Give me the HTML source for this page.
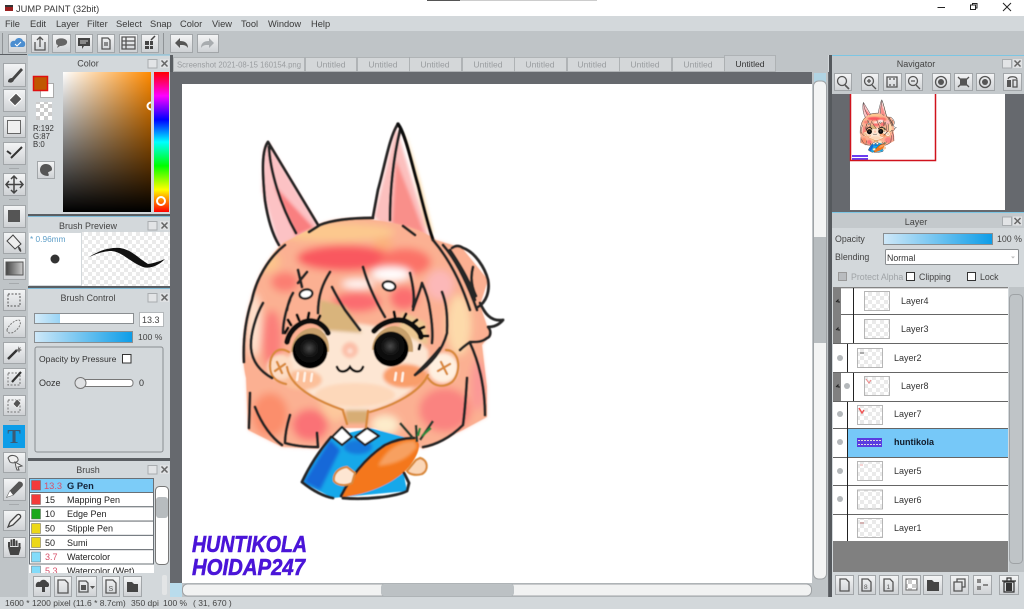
<!DOCTYPE html>
<html><head><meta charset="utf-8"><title>JUMP PAINT</title>
<style>
html,body{margin:0;padding:0;background:#d3d8db;width:1024px;height:609px;overflow:hidden}
svg{display:block;font-family:"Liberation Sans",sans-serif;font-size:9px;fill:#333}
.b{fill:url(#btn);stroke:#a2a6a9;stroke-width:1}
.h{fill:#c5cacd}
.t{text-anchor:middle;fill:#444;font-size:9px}
.m{font-size:9.3px;fill:#3a3a3a}
.ln{fill:none;stroke:#262626;stroke-width:2.9;stroke-linecap:round;stroke-linejoin:round}
.o{fill:none;stroke:#d98a3e;stroke-width:2.4;stroke-linecap:round}
.i{fill:#555}
.s{fill:none;stroke:#555;stroke-width:1.3}
.tab{fill:#d4d7d9;stroke:#a5a9ac;stroke-width:.7}
.tt{font-size:8.6px;fill:#9a9da0;text-anchor:middle}
.row{fill:#fff;stroke:#333;stroke-width:.8}
.lt{font-size:9px;fill:#333}
.br{font-size:9px;fill:#222}
.dot{fill:#b4b8bb}
.th{fill:url(#chk);stroke:#a5a5a5;stroke-width:.8}
</style></head><body>
<svg width="1024" height="609" viewBox="0 0 1024 609" xmlns="http://www.w3.org/2000/svg">
<defs>
<linearGradient id="btn" x1="0" y1="0" x2="0" y2="1"><stop offset="0" stop-color="#f4f5f6"/><stop offset="1" stop-color="#ced1d4"/></linearGradient>
<linearGradient id="bar" x1="0" y1="0" x2="1" y2="0"><stop offset="0" stop-color="#cfe8f8"/><stop offset="1" stop-color="#0d9de8"/></linearGradient>
<linearGradient id="bar2" x1="0" y1="0" x2="1" y2="0"><stop offset="0" stop-color="#d4ebf9"/><stop offset="1" stop-color="#99d4f5"/></linearGradient>
<linearGradient id="cw" x1="0" y1="0" x2="1" y2="0"><stop offset="0" stop-color="#fff"/><stop offset="1" stop-color="#ff8a00"/></linearGradient>
<linearGradient id="cb" x1="0" y1="0" x2="0" y2="1"><stop offset="0" stop-color="#000" stop-opacity="0"/><stop offset="1" stop-color="#000"/></linearGradient>
<linearGradient id="hue" x1="0" y1="0" x2="0" y2="1"><stop offset="0" stop-color="#f00"/><stop offset=".17" stop-color="#f0f"/><stop offset=".34" stop-color="#00f"/><stop offset=".5" stop-color="#0ff"/><stop offset=".67" stop-color="#0f0"/><stop offset=".84" stop-color="#ff0"/><stop offset="1" stop-color="#f00"/></linearGradient>
<linearGradient id="grad" x1="0" y1="0" x2="1" y2="0"><stop offset="0" stop-color="#444"/><stop offset="1" stop-color="#ccc"/></linearGradient>
<pattern id="chk" width="8" height="8" patternUnits="userSpaceOnUse"><rect width="8" height="8" fill="#fff"/><rect width="4" height="4" fill="#eaeaea"/><rect x="4" y="4" width="4" height="4" fill="#eaeaea"/></pattern>
<pattern id="chk2" width="8" height="8" patternUnits="userSpaceOnUse"><rect width="8" height="8" fill="#fff"/><rect width="4" height="4" fill="#ccc"/><rect x="4" y="4" width="4" height="4" fill="#ccc"/></pattern>
<filter id="bl" x="-30%" y="-30%" width="160%" height="160%"><feGaussianBlur stdDeviation="4"/></filter>
<filter id="bl2" x="-30%" y="-30%" width="160%" height="160%"><feGaussianBlur stdDeviation="1.6"/></filter>
<filter id="bl3"><feGaussianBlur stdDeviation=".4"/></filter>
<radialGradient id="eye" cx=".48" cy=".42" r=".5"><stop offset="0" stop-color="#4a4a4a"/><stop offset=".45" stop-color="#141414"/><stop offset="1" stop-color="#000"/></radialGradient>
<clipPath id="navc"><rect x="850" y="94" width="155" height="116"/></clipPath>
<clipPath id="brc"><rect x="29" y="478" width="125" height="95"/></clipPath>
<clipPath id="colc"><rect x="63" y="72" width="88" height="140"/></clipPath>
<clipPath id="hairc"><path d="M283 243C262 262 248 295 244 333C242 350 243 365 246 378L248 430L282 447L318 449L345 428L375 428L423 449L463 430L487 417L487 387L482 345L490 335L480 305L488 280L462 248L436 240C410 220 340 212 318 225Z"/></clipPath>

<g id="chibi">
 <g filter="url(#bl2)">
  <path d="M264 150L268 142L318 225L295 245L278 245L262 190Z" fill="#fcc2c4"/>
  <path d="M274 185L314 228L296 236Z" fill="#f97f80"/>
  <path d="M374 217L396 126L430 240L400 240Z" fill="#fcc0be"/>
  <path d="M396 160L412 200L425 235L392 225Z" fill="#f98f8a"/>
  <path d="M405 130L420 180L434 235L425 225Z" fill="#fde0b4"/>
 </g>
 <path d="M283 243C262 262 248 295 244 333C242 350 243 365 246 378L248 430L282 447L318 449L345 428L375 428L423 449L463 430L487 417L487 387L482 345L490 335L480 305L488 280L462 248L436 240C410 220 340 212 318 225Z" fill="#fbb8a0" opacity=".55" filter="url(#bl2)"/>
 <g clip-path="url(#hairc)">
 <g filter="url(#bl)">
  <rect x="235" y="210" width="260" height="240" fill="#fbb092"/>
  <ellipse cx="335" cy="232" rx="60" ry="9" fill="#fcc98e"/>
  <ellipse cx="345" cy="258" rx="48" ry="13" fill="#f9585e"/>
  <ellipse cx="405" cy="262" rx="26" ry="14" fill="#fb7268"/>
  <ellipse cx="383" cy="244" rx="10" ry="6" fill="#fbb07c"/>
  <ellipse cx="285" cy="282" rx="14" ry="10" fill="#fb7e72"/>
  <ellipse cx="268" cy="262" rx="12" ry="10" fill="#fcc48c"/>
  <ellipse cx="272" cy="340" rx="10" ry="30" fill="#fb7f7a"/>
  <ellipse cx="254" cy="325" rx="7" ry="32" fill="#fee3cf"/>
  <ellipse cx="270" cy="415" rx="18" ry="22" fill="#fb8e6c"/>
  <ellipse cx="310" cy="425" rx="18" ry="16" fill="#fa7276"/>
  <ellipse cx="335" cy="405" rx="14" ry="16" fill="#fdc89c"/>
  <ellipse cx="445" cy="410" rx="26" ry="22" fill="#fa8380"/>
  <ellipse cx="385" cy="425" rx="14" ry="10" fill="#fdeccb"/>
  <ellipse cx="459" cy="325" rx="12" ry="30" fill="#fddaaa"/>
  <ellipse cx="478" cy="385" rx="7" ry="26" fill="#fb9696"/>
  <ellipse cx="357" cy="302" rx="24" ry="10" fill="#fb6c70"/>
  <ellipse cx="404" cy="298" rx="14" ry="12" fill="#fb6e70"/>
  <ellipse cx="391" cy="274" rx="20" ry="7" fill="#fff"/>
  <ellipse cx="358" cy="284" rx="16" ry="4" fill="#fff"/>
  <ellipse cx="440" cy="285" rx="14" ry="15" fill="#fcb8b8"/>
 </g>
 </g>
 <g filter="url(#bl2)">
  <path d="M288 360C295 340 320 330 345 322C375 325 410 330 428 350C432 375 410 400 372 410L345 410C310 398 290 385 288 360Z" fill="#fde6d3"/>
  <path d="M320 300L345 306L362 333L320 330Z" fill="#d9b47c"/>
  <path d="M402 312L425 322L428 345L398 333Z" fill="#ecc892"/>
  <ellipse cx="405" cy="376" rx="22" ry="12" fill="#f99e6a"/>
  <ellipse cx="302" cy="380" rx="20" ry="10" fill="#fcc09a"/>
  <ellipse cx="355" cy="395" rx="40" ry="12" fill="#fdd8ba"/>
  <circle cx="350" cy="350" r="8" fill="#fcbfa8"/>
  <circle cx="350" cy="351" r="2" fill="#fff0e8"/>
  <circle cx="280" cy="367" r="13" fill="#fddcc2"/>
  <circle cx="443" cy="368" r="15" fill="#fff0e0"/>
  <rect x="346" y="410" width="22" height="13" fill="#d7ad74"/>
 </g>
 <path d="M331 437C318 450 310 465 302 482L333 498L343 497L407 491L403 470L415 440L370 428Z" fill="#16a8ea"/>
 <path d="M330 440L304 482L320 490L340 450Z" fill="#1868d8" filter="url(#bl2)"/>
 <ellipse cx="358" cy="447" rx="14" ry="7" fill="#1478dc" filter="url(#bl2)"/>
 <path d="M416 438C400 436 380 445 370 457C358 470 347 482 340 497C360 496 385 488 403 473C412 465 420 452 419 444Z" fill="#f4771c"/>
 <path d="M415 441C400 440 385 450 378 466C395 465 410 458 417 447Z" fill="#f7a060" filter="url(#bl2)"/>
 <path class="ln" d="M331 437C320 450 310 465 302 482C312 490 322 496 333 498M343 498C365 500 395 497 407 491L409 483L404 473"/>
 <path class="ln" d="M341 496C350 478 365 458 385 445C395 440 405 438 414 438" stroke-width="2.3"/>
 <path d="M332 437L342 427L352 437L342 445Z M355 437L367 428L379 436L365 445Z" fill="#fff" stroke="#222" stroke-width="2.4" stroke-linejoin="round"/>
 <path d="M417 442L416 425M420 440L433 421M413 438L400 423" stroke="#2c3c30" stroke-width="2.6" fill="none"/>
 <path d="M422 436L431 428M418 436L420 428" stroke="#2f8a3c" stroke-width="2.4" fill="none"/>
 <path d="M347 467C338 468 333 474 334 481C338 486 346 486 352 483L355 473Z" fill="#fde6d2" stroke="#d98a3e" stroke-width="2.2"/>
 <path d="M420 458C428 460 429 470 422 474C415 476 409 474 407 471L416 460Z" fill="#fbd6b6" stroke="#d98a3e" stroke-width="2.2"/>
 <path class="o" d="M287 367C290 388 320 402 343 410M370 412C395 405 420 392 428 375"/>
 <path class="o" d="M289 352C277 345 270 355 270 366C270 376 276 382 286 384"/>
 <path class="o" d="M446 350C460 350 462 372 452 382C444 388 434 387 428 378"/>
 <path class="o" d="M343 411L347 424M368 411L366 427"/>
 <path class="o" d="M277 362L282 373M285 364L275 371M441 362L447 374M450 364L438 371" stroke-width="1.8"/>
 <path d="M291 352C292 335 305 327 315 328C325 330 330 340 329 352Z" fill="#c8a06c"/>
 <path d="M372 350C372 335 385 326 395 326C408 328 414 340 413 352Z" fill="#c8a06c"/>
 <circle cx="310" cy="351" r="17.500" fill="url(#eye)"/>
 <circle cx="391" cy="349" r="17.500" fill="url(#eye)"/>
 <path d="M287 342C290 328 303 320 312 321C320 322 326 328 328 333" fill="none" stroke="#111" stroke-width="5.500" stroke-linecap="round"/>
 <path d="M374 331C382 322 395 318 405 321C414 325 421 332 421 337" fill="none" stroke="#111" stroke-width="5.500" stroke-linecap="round"/>
 <path d="M285 333l3-5M291 325l-3-5M299 320l-2-5M308 318l1-5M318 320l2-4M395 317l-1-5M404 318l2-4M413 323l4-3M419 329l5-2M424 336l4 0M420 345l-1 4" stroke="#111" stroke-width="3" stroke-linecap="round"/>
 <path d="M337 367C339 373 346 373 350 367C354 373 361 373 363 367" fill="none" stroke="#111" stroke-width="2.600" stroke-linecap="round"/>
 <path d="M298 373l-1 7M305 373l-1 8M312 374l-1 7M396 373l-1 7M403 373l-1 8" stroke="#fff3e8" stroke-width="2.400" stroke-linecap="round"/>
 <g class="ln">
  <path d="M268 142C262 150 262 170 265 200C268 220 273 235 279 245M268 142L318 225M269 147C270 170 280 205 296 233"/>
  <path d="M398 124C390 135 385 165 378 190L373 217M400 130C393 160 390 190 390 220"/>
  <path d="M398 124C406 135 412 165 418 185C423 205 428 225 433 240" stroke="#0c0c0c" stroke-width="3.400"/>
  <path d="M309 232L320 225C335 219 355 218 373 218M403 226L415 235"/>
  <path d="M285 245C268 258 256 280 252 300C246 318 243 340 244 362M263 303C256 315 250 335 251 348C252 360 258 370 272 378"/>
  <path d="M250 393L249 428M255 407C262 425 272 438 282 445M290 415C287 425 285 435 285 443C295 446 308 447 318 447L317 433"/>
  <path d="M433 240C450 260 462 285 470 310M443 245C458 262 470 290 477 310M450 250C462 268 472 285 475 300"/>
  <path d="M452 248C456 245 460 246 463 248C475 252 485 268 488 280C490 292 486 302 478 307M473 267C470 278 472 288 476 296"/>
  <path d="M480 303C484 312 490 322 503 320C498 326 492 327 488 327C492 332 490 337 487 338C482 342 478 342 470 342C466 345 463 347 460 350"/>
  <path d="M470 343C478 360 485 385 485 415M467 378C466 395 465 410 463 425C450 438 435 445 423 447"/>
  <path d="M298 270L302 287M307 272L298 283M287 310C288 303 290 298 293 293M290 300C285 312 283 325 283 333M330 272C323 283 318 295 318 313M332 287C336 295 340 302 345 310L360 330M363 267C368 285 375 300 385 317"/>
  <path d="M410 273C413 285 415 298 413 307M422 283C419 295 415 302 413 310M422 283C426 292 429 302 430 310C432 322 433 333 432 343M442 292C445 300 448 310 447 333C442 352 430 365 415 375M415 375C422 368 432 358 440 348"/>
 </g>
 <ellipse cx="306" cy="294" rx="6.500" ry="4.500" fill="#fff" stroke="#222" stroke-width="2.400" transform="rotate(-12 306 294)"/>
 <ellipse cx="389" cy="286" rx="6.500" ry="4.500" fill="#fff" stroke="#222" stroke-width="2.400" transform="rotate(12 389 286)"/>
</g>
</defs>

<!-- base -->
<rect width="1024" height="16" fill="#fff"/>
<rect x="427" y="0" width="33" height="1" fill="#555"/><rect x="460" y="0" width="137" height="1" fill="#ccc"/>
<rect y="16" width="1024" height="15" fill="#d3d8db"/>
<rect y="31" width="1024" height="24" fill="#bfc4c7"/>
<rect y="55" width="28" height="554" fill="#bfc4c7"/>
<rect x="28" y="55" width="142" height="542" fill="#d3d8db"/>
<rect x="170" y="55" width="658" height="17" fill="#bfc4c7"/>
<rect x="170" y="72" width="662" height="525" fill="#66696e"/>
<rect y="597" width="1024" height="12" fill="#d3d8db"/>

<!-- title -->
<rect x="5" y="5" width="8" height="6" fill="#9a2020"/><rect x="5" y="5" width="8" height="2" fill="#333"/>
<text x="16" y="12" class="m" fill="#222">JUMP PAINT (32bit)</text>
<path d="M937.500 7.500H945" stroke="#222" fill="none"/>
<path d="M970.500 5V9.500H975.500V5ZM972.500 5V3.500H977V8H975.500" stroke="#222" fill="none"/>
<path d="M1003 3L1011 11M1011 3L1003 11" stroke="#222" fill="none"/>
<text y="27" class="m"><tspan x="5">File</tspan><tspan x="30">Edit</tspan><tspan x="56">Layer</tspan><tspan x="87">Filter</tspan><tspan x="116">Select</tspan><tspan x="150">Snap</tspan><tspan x="180">Color</tspan><tspan x="212">View</tspan><tspan x="241">Tool</tspan><tspan x="268">Window</tspan><tspan x="311">Help</tspan></text>

<!-- toolbar -->
<rect x="2" y="33" width="1" height="21" fill="#8f9396"/><rect x="163" y="33" width="1" height="21" fill="#8f9396"/>
<rect x="8.500" y="34.500" width="18" height="18" class="b"/>
<path d="M11 47C9 43 12 40 15 41C16 37 22 37 23 41C26 41 26 47 23 47Z" fill="#4c8ed0"/><path d="M15 44l2 2 4-4" stroke="#fff" fill="none"/>
<rect x="31.500" y="34.500" width="17" height="18" class="b"/>
<path d="M35 42V50H45V42M40 47V37M37 40L40 37L43 40" class="s"/>
<rect x="52.500" y="34.500" width="18" height="18" class="b"/>
<path d="M56 41C56 38 65 37 67 41C68 45 63 46 60 46L57 48L58 45C56 45 56 43 56 41Z" fill="#666"/>
<rect x="75.500" y="34.500" width="17" height="18" class="b"/>
<path d="M78 38H90V46H84L82 49V46H78Z" fill="#444"/><path d="M80 41H88M80 43H86" stroke="#ccc"/>
<rect x="97.500" y="34.500" width="17" height="18" class="b"/>
<path d="M102 38H108L110 40V49H102ZM104 43H108M104 45H108" class="s"/>
<rect x="119.500" y="34.500" width="18" height="18" class="b"/>
<path d="M122 37H135V49H122ZM122 41H135M122 45H135M126 37V49" class="s"/>
<rect x="141.500" y="34.500" width="17" height="18" class="b"/>
<path d="M145 41H149V45H145ZM150 41H153V45H150ZM145 46H149V49H145ZM150 46H153V49H150Z" fill="#444"/><path d="M151 40L155 36" stroke="#444" stroke-width="1.500"/>
<rect x="170.500" y="34.500" width="22" height="18" class="b"/>
<path d="M175 43L180 38V41C185 41 188 43 188 48C186 45 184 45 180 45V48Z" fill="#555"/>
<rect x="197.500" y="34.500" width="21" height="18" class="b"/>
<path d="M214 43L209 38V41C204 41 201 43 201 48C203 45 205 45 209 45V48Z" fill="#a8acaf"/>
<rect x="0" y="54" width="27" height="1" fill="#5a5e62"/><rect x="28" y="54.500" width="142" height="1" fill="#7dbfdc"/>
<rect x="170" y="55" width="3" height="17" fill="#5a5e62"/>

<!-- tabs -->
<rect x="173.500" y="57.500" width="131" height="14" class="tab"/>
<rect x="305.500" y="57.500" width="51" height="14" class="tab"/><rect x="357.500" y="57.500" width="52" height="14" class="tab"/><rect x="409.500" y="57.500" width="52" height="14" class="tab"/><rect x="462.500" y="57.500" width="52" height="14" class="tab"/><rect x="514.500" y="57.500" width="52" height="14" class="tab"/><rect x="567.500" y="57.500" width="52" height="14" class="tab"/><rect x="619.500" y="57.500" width="52" height="14" class="tab"/><rect x="672.500" y="57.500" width="52" height="14" class="tab"/>
<rect x="724.500" y="55.500" width="51" height="16" fill="#c9cdd0" stroke="#a5a9ac" stroke-width=".7"/>
<text x="177" y="67.500" class="tt" style="text-anchor:start" textLength="124" lengthAdjust="spacingAndGlyphs">Screenshot 2021-08-15 160154.png</text>
<text y="67.500" class="tt"><tspan x="331">Untitled</tspan></text><text y="67.500" class="tt"><tspan x="383">Untitled</tspan></text><text y="67.500" class="tt"><tspan x="435">Untitled</tspan></text><text y="67.500" class="tt"><tspan x="488">Untitled</tspan></text><text y="67.500" class="tt"><tspan x="540">Untitled</tspan></text><text y="67.500" class="tt"><tspan x="592">Untitled</tspan></text><text y="67.500" class="tt"><tspan x="645">Untitled</tspan></text><text y="67.500" class="tt"><tspan x="698">Untitled</tspan></text>
<text x="750" y="67" class="tt" style="fill:#333">Untitled</text>

<!-- canvas -->
<rect x="182" y="84" width="630" height="499" fill="#fff"/>
<g filter="url(#bl3)"><use href="#chibi"/></g>
<text x="192" y="552" font-family="Liberation Sans" font-weight="bold" font-style="italic" font-size="23" textLength="115" lengthAdjust="spacingAndGlyphs" stroke="#4a14d8" stroke-width=".6" style="fill:#4a14d8">HUNTIKOLA</text>
<text x="192" y="575" font-family="Liberation Sans" font-weight="bold" font-style="italic" font-size="23" textLength="113" lengthAdjust="spacingAndGlyphs" stroke="#4a14d8" stroke-width=".6" style="fill:#4a14d8">HOIDAP247</text>

<!-- v scrollbar -->
<rect x="812" y="72" width="16" height="525" fill="#bfc4c7"/>
<rect x="814" y="73" width="12" height="9" fill="#a8dff5" opacity=".6"/>
<rect x="813.500" y="81" width="13" height="498" rx="5" fill="#f3f4f4" stroke="#9ea2a5"/>
<rect x="814" y="237" width="12" height="106" fill="#b7bcbf"/>
<!-- h scrollbar -->
<rect x="182" y="583" width="630" height="14" fill="#bfc4c7"/>
<rect x="182.500" y="584" width="629" height="12" rx="5" fill="#f1f2f2" stroke="#9ea2a5"/>
<rect x="381" y="584" width="133" height="12" rx="3" fill="#bcc1c4"/>
<rect x="170" y="583" width="12" height="14" fill="#b9dcec"/>

<!-- left tools -->
<rect x="3.500" y="63.500" width="22" height="23" class="b"/><path d="M8 82C8 79 10 78 12 78L21 68L23 70L14 80C13 83 10 83 8 82Z" fill="#444"/>
<rect x="3.500" y="89.500" width="22" height="22" class="b"/><path d="M9 100L16 93L22 99L15 106Z" fill="#555" stroke="#fff"/>
<rect x="3.500" y="116.500" width="22" height="21" class="b"/><rect x="7.500" y="120.500" width="13" height="13" fill="#f0f0f0" stroke="#666"/>
<rect x="3.500" y="142.500" width="22" height="22" class="b"/><path d="M7 151L11 154M11 158L14 155L22 147" stroke="#333" stroke-width="2" fill="none"/>
<rect x="9" y="168" width="10" height="1" fill="#a5a9ac"/>
<rect x="3.500" y="173.500" width="22" height="22" class="b"/><path d="M14 176V193M6 184.500H23M11 179L14 176L17 179M11 190L14 193L17 190M9 181L6 184.500L9 188M20 181L23 184.500L20 188" stroke="#444" stroke-width="1.500" fill="none"/>
<rect x="9" y="199" width="10" height="1" fill="#a5a9ac"/>
<rect x="3.500" y="205.500" width="22" height="22" class="b"/><rect x="8" y="210" width="12" height="12" fill="#555"/>
<rect x="3.500" y="232.500" width="22" height="21" class="b"/><path d="M7 241L13 235L21 244L15 249Z" fill="#eee" stroke="#444"/><path d="M18 246C20 247 22 250 21 252C19 251 18 249 18 246Z" fill="#444"/>
<rect x="3.500" y="258.500" width="22" height="21" class="b"/><rect x="6" y="262" width="17" height="13" fill="url(#grad)" stroke="#555"/>
<rect x="9" y="283" width="10" height="1" fill="#a5a9ac"/>
<rect x="3.500" y="289.500" width="22" height="21" class="b"/><rect x="8" y="294" width="12" height="12" fill="none" stroke="#555" stroke-dasharray="2 1.500"/>
<rect x="3.500" y="316.500" width="22" height="21" class="b"/><path d="M7 330C8 326 14 320 19 320C22 322 20 328 14 332C10 334 7 333 7 330Z" fill="none" stroke="#777" stroke-dasharray="2 1.200"/>
<rect x="3.500" y="342.500" width="22" height="21" class="b"/><path d="M8 359L17 350" stroke="#333" stroke-width="2.500"/><path d="M18 346l1 2 2-1-1 2 2 1-2 1-1 2-1-2-2-1 2-1z" fill="#777"/>
<rect x="3.500" y="368.500" width="22" height="20" class="b"/><rect x="8" y="373" width="12" height="12" fill="none" stroke="#777" stroke-dasharray="2 1.500"/><path d="M12 382L21 372" stroke="#333" stroke-width="2.200"/>
<rect x="3.500" y="395.500" width="22" height="20" class="b"/><rect x="8" y="400" width="12" height="12" fill="none" stroke="#777" stroke-dasharray="2 1.500"/><path d="M13 404L17 399L21 403L17 408Z" fill="#555" stroke="#fff" stroke-width=".6"/>
<rect x="9" y="420" width="10" height="1" fill="#a5a9ac"/>
<rect x="3" y="425" width="22" height="23" fill="#0d9de8"/>
<text x="14" y="443" text-anchor="middle" font-size="20" font-family="Liberation Serif" font-weight="bold" style="fill:#3c5a74">T</text>
<rect x="3.500" y="452.500" width="22" height="20" class="b"/><path d="M8 458C10 454 17 455 18 459C19 462 13 464 10 462ZM15 462L22 466L18 467L19 470L17 470L16 467Z" fill="#eee" stroke="#555"/>
<rect x="3.500" y="478.500" width="22" height="22" class="b"/><path d="M7 497L10 491L19 482C22 482 23 484 22 486L13 495Z" fill="#555" stroke="#555"/><path d="M7 497L10 491L13 495Z" fill="#fff"/>
<rect x="9" y="504" width="10" height="1" fill="#a5a9ac"/>
<rect x="3.500" y="510.500" width="22" height="20" class="b"/><path d="M8 527L10 522L17 515C19 513 22 516 20 518L13 525Z" fill="#eee" stroke="#444" stroke-width="1.300"/>
<rect x="3.500" y="537.500" width="22" height="20" class="b"/><path d="M9 547V542M11.500 546V539.500M14 546V539M16.500 546V540.500M19.500 548V543M9 547L11 554H18L20 547" stroke="#444" stroke-width="2" fill="#444"/>

<!-- color panel -->
<text x="88" y="66.500" class="t">Color</text>
<rect x="148" y="59.500" width="9" height="8.500" fill="#e2e4e6" stroke="#a8acaf"/><rect x="160" y="59" width="9" height="9" fill="#dfe1e3"/><path d="M161.500 60.500L167.500 66.500M167.500 60.500L161.500 66.500" stroke="#666" stroke-width="1.500"/>
<rect x="40.500" y="83.500" width="13" height="14" fill="#fff" stroke="#aaa"/>
<rect x="33.500" y="76.500" width="14" height="14" fill="#c05700" stroke="#e01010" stroke-width="1.500"/>
<rect x="36" y="102" width="16" height="18" fill="url(#chk2)"/>
<text font-size="7.800" style="fill:#333"><tspan x="33" y="131">R:192</tspan><tspan x="33" y="139">G:87</tspan><tspan x="33" y="147">B:0</tspan></text>
<rect x="37.500" y="161.500" width="17" height="17" class="b"/>
<path d="M46 164C41 164 40 168 40 170C40 174 44 176 48 176C49 176 49 174 48 173C48 171 52 172 52 169C52 166 49 164 46 164Z" fill="#555"/>
<rect x="63" y="72" width="88" height="140" fill="url(#cw)"/><rect x="63" y="72" width="88" height="140" fill="url(#cb)"/>
<g clip-path="url(#colc)"><circle cx="151" cy="106" r="3.500" fill="none" stroke="#fff" stroke-width="2"/></g>
<rect x="154" y="72" width="15" height="140" fill="url(#hue)"/>
<circle cx="161" cy="201" r="4" fill="none" stroke="#fff" stroke-width="2"/>
<rect x="28" y="214" width="142" height="3" fill="#5a5e62"/><rect x="28" y="216" width="142" height="1" fill="#7db9d6"/>

<!-- brush preview -->
<text x="88" y="229" class="t">Brush Preview</text>
<rect x="148" y="221.500" width="9" height="8.500" fill="#e2e4e6" stroke="#a8acaf"/><rect x="160" y="221" width="9" height="9" fill="#dfe1e3"/><path d="M161.500 222.500L167.500 228.500M167.500 222.500L161.500 228.500" stroke="#666" stroke-width="1.500"/>
<rect x="29" y="233" width="52" height="52" fill="#fff"/>
<rect x="82" y="232" width="88" height="54" fill="url(#chk)"/>
<text x="30" y="242" font-size="8.300" style="fill:#5f9fc8">* 0.96mm</text>
<circle cx="55" cy="259" r="4.500" fill="#333"/>
<path d="M89 257C100 250 110 247 120 248C132 250 138 258 148 264C155 263 160 261 165 259C158 266 150 269 143 267C130 262 122 252 112 251C105 251 98 253 89 257Z" fill="#111"/>
<rect x="28" y="286" width="142" height="3" fill="#5a5e62"/><rect x="28" y="288" width="142" height="1" fill="#7db9d6"/>

<!-- brush control -->
<text x="88" y="301" class="t">Brush Control</text>
<rect x="148" y="293.500" width="9" height="8.500" fill="#e2e4e6" stroke="#a8acaf"/><rect x="160" y="293" width="9" height="9" fill="#dfe1e3"/><path d="M161.500 294.500L167.500 300.500M167.500 294.500L161.500 300.500" stroke="#666" stroke-width="1.500"/>
<rect x="34.500" y="313.500" width="99" height="10" fill="#fff" stroke="#8a8e91"/>
<rect x="35" y="314" width="25" height="9" fill="url(#bar2)"/>
<rect x="139.500" y="312.500" width="24" height="14" fill="#fff" stroke="#b4b8bb"/>
<text x="142" y="323" font-size="9" style="fill:#444">13.3</text>
<rect x="34.500" y="331.500" width="98" height="11" fill="url(#bar)" stroke="#8a8e91"/>
<text x="138" y="340" font-size="8.600" style="fill:#444">100 %</text>
<rect x="35" y="347" width="128" height="105" rx="2" fill="#d3d8db" stroke="#8a8e91"/>
<text x="39" y="362" font-size="8.600" style="fill:#333">Opacity by Pressure</text>
<rect x="122.500" y="354.500" width="8.500" height="8.500" fill="#fff" stroke="#333"/>
<text x="39" y="386" font-size="9" style="fill:#333">Ooze</text>
<rect x="77" y="379.500" width="56" height="7" rx="3" fill="#fff" stroke="#777"/>
<circle cx="80.500" cy="383" r="5.500" fill="#dfe1e3" stroke="#777"/>
<text x="139" y="386" font-size="9" style="fill:#333">0</text>
<rect x="28" y="458" width="142" height="3" fill="#5a5e62"/>

<!-- brush list -->
<text x="88" y="473" class="t">Brush</text>
<rect x="148" y="465.500" width="9" height="8.500" fill="#e2e4e6" stroke="#a8acaf"/><rect x="160" y="465" width="9" height="9" fill="#dfe1e3"/><path d="M161.500 466.500L167.500 472.500M167.500 466.500L161.500 472.500" stroke="#666" stroke-width="1.500"/>
<g clip-path="url(#brc)">
<rect x="29" y="478" width="125" height="95" fill="#fff"/>
<rect x="29.500" y="478.500" width="124" height="14" fill="#7cccf8" stroke="#6a7076"/>
<rect x="29.500" y="492.500" width="124" height="14.300" fill="#fff" stroke="#6a7076"/>
<rect x="29.500" y="506.800" width="124" height="14.300" fill="#fff" stroke="#6a7076"/>
<rect x="29.500" y="521.100" width="124" height="14.300" fill="#fff" stroke="#6a7076"/>
<rect x="29.500" y="535.400" width="124" height="14.300" fill="#fff" stroke="#6a7076"/>
<rect x="29.500" y="549.700" width="124" height="14.300" fill="#fff" stroke="#6a7076"/>
<rect x="31.500" y="480.500" width="9" height="9.500" fill="#f33a3a" stroke="#666" stroke-width=".5"/>
<rect x="31.500" y="494.500" width="9" height="10" fill="#f33a3a" stroke="#666" stroke-width=".5"/>
<rect x="31.500" y="509" width="9" height="10" fill="#1aa81a" stroke="#666" stroke-width=".5"/>
<rect x="31.500" y="523.500" width="9" height="10" fill="#ecd818" stroke="#666" stroke-width=".5"/>
<rect x="31.500" y="537.500" width="9" height="10" fill="#ecd818" stroke="#666" stroke-width=".5"/>
<rect x="31.500" y="552" width="9" height="10" fill="#83dcfa" stroke="#666" stroke-width=".5"/>
<rect x="31.500" y="566" width="9" height="10" fill="#83dcfa" stroke="#666" stroke-width=".5"/>
<text x="44" y="489" font-size="9.300" style="fill:#d7506a">13.3</text><text x="67" y="489" font-size="9.300" font-weight="bold" style="fill:#14233a">G Pen</text>
<text x="45" y="503" class="br">15</text><text x="67" y="503" class="br">Mapping Pen</text>
<text x="45" y="517" class="br">10</text><text x="67" y="517" class="br">Edge Pen</text>
<text x="45" y="531.500" class="br">50</text><text x="67" y="531.500" class="br">Stipple Pen</text>
<text x="45" y="546" class="br">50</text><text x="67" y="546" class="br">Sumi</text>
<text x="45" y="560" class="br" style="fill:#d7506a">3.7</text><text x="67" y="560" class="br">Watercolor</text>
<text x="45" y="574" class="br" style="fill:#d7506a">5.3</text><text x="67" y="574" class="br">Watercolor (Wet)</text>
</g>
<rect x="155.500" y="486.500" width="13" height="78" rx="4" fill="#fff" stroke="#777"/>
<rect x="156" y="497" width="12" height="21" rx="3" fill="#b7bcbf"/>
<rect x="33.500" y="576.500" width="17" height="20" class="b"/><path d="M36 587C35 583 38 581 40 582C41 579 46 579 47 582C49 582 50 586 48 587ZM42 587H45V592H42Z" fill="#444"/>
<rect x="54.500" y="576.500" width="17" height="20" class="b"/><path d="M58 580H65L68 583V593H58Z" class="s"/>
<rect x="76.500" y="576.500" width="20" height="20" class="b"/><path d="M79 581H86L88 583V592H79Z" class="s"/><rect x="81" y="585" width="5" height="5" fill="#555"/><path d="M90 586H95L92.500 589Z" fill="#555"/>
<rect x="102.500" y="576.500" width="17" height="20" class="b"/><path d="M106 580H113L116 583V593H106Z" class="s"/><text x="108.500" y="591" font-size="7" style="fill:#555">S</text>
<rect x="123.500" y="576.500" width="18" height="20" class="b"/><path d="M127 582H132L134 584H138V592H127Z" fill="#444"/>
<rect x="162" y="575" width="5" height="20" rx="2" fill="#e3e5e6"/>

<!-- status -->
<text y="606" font-size="8.500" style="fill:#444"><tspan x="5">1600 * 1200 pixel</tspan><tspan x="73">(11.6 * 8.7cm)</tspan><tspan x="131">350 dpi</tspan><tspan x="163">100 %</tspan><tspan x="193">( 31, 670 )</tspan></text>

<!-- right panel -->
<rect x="829" y="55" width="3" height="542" fill="#55595d"/>
<rect x="832" y="55" width="192" height="39" fill="#c4c9cc"/>
<rect x="832" y="55" width="192" height="1" fill="#7dc6e3"/>
<text x="916" y="67" class="t">Navigator</text>
<rect x="1002.500" y="59.500" width="9" height="8.500" fill="#e2e4e6" stroke="#a8acaf"/><rect x="1013" y="59" width="9" height="9" fill="#dfe1e3"/><path d="M1014.500 60.500L1020.500 66.500M1020.500 60.500L1014.500 66.500" stroke="#666" stroke-width="1.500"/>
<rect x="834.500" y="73.500" width="17" height="17" class="b"/><circle cx="842" cy="81" r="4.500" class="s"/><path d="M845 85L849 89" stroke="#555" stroke-width="1.600"/>
<rect x="861.500" y="73.500" width="17" height="17" class="b"/><circle cx="869" cy="81" r="4.500" class="s"/><path d="M872 85L876 89M867 81H871M869 79V83" stroke="#555" stroke-width="1.300"/>
<rect x="883.500" y="73.500" width="18" height="17" class="b"/><path d="M887 77H897V87H887ZM889 79h2M895 79h-2M889 85h2M895 85h-2" class="s"/>
<rect x="905.500" y="73.500" width="17" height="17" class="b"/><circle cx="913" cy="81" r="4.500" class="s"/><path d="M916 85L920 89M911 81H915" stroke="#555" stroke-width="1.300"/>
<rect x="932.500" y="73.500" width="18" height="17" class="b"/><circle cx="941" cy="82" r="5.500" class="s"/><circle cx="941" cy="82" r="3" fill="#555"/>
<rect x="954.500" y="73.500" width="18" height="17" class="b"/><path d="M958 77L960 79H967L969 77M958 87L960 85H967L969 87" class="s"/><rect x="960" y="79" width="7" height="6" fill="#555"/>
<rect x="976.500" y="73.500" width="18" height="17" class="b"/><circle cx="985" cy="82" r="5.500" class="s"/><circle cx="985" cy="82" r="3" fill="#555"/>
<rect x="1003.500" y="73.500" width="18" height="17" class="b"/><path d="M1007 80H1011V87H1007Z" fill="#555"/><path d="M1013 80H1017V87H1013ZM1008 79C1009 76 1016 76 1017 79" class="s"/>
<rect x="832" y="94" width="192" height="118" fill="#66696e"/>
<rect x="850" y="94" width="155" height="116" fill="#fff"/>
<g clip-path="url(#navc)">
 <g transform="translate(826 82.600) scale(.14)"><use href="#chibi"/></g>
 <rect x="852" y="155" width="16" height="2" fill="#6a3cf0"/><rect x="852" y="158" width="16" height="2" fill="#6a3cf0"/>
</g>
<path d="M850.500 94V160.500H935.500V94" fill="none" stroke="#d0121c" stroke-width="1.500"/>

<!-- layer panel -->
<rect x="832" y="212" width="192" height="385" fill="#d3d8db"/>
<rect x="832" y="212" width="192" height="1" fill="#7dc6e3"/>
<rect x="832" y="213" width="192" height="15" fill="#c4c9cc"/>
<text x="916" y="225" class="t">Layer</text>
<rect x="1002.500" y="217" width="9" height="8.500" fill="#e2e4e6" stroke="#a8acaf"/><rect x="1013" y="216.500" width="9" height="9" fill="#dfe1e3"/><path d="M1014.500 218L1020.500 224M1020.500 218L1014.500 224" stroke="#666" stroke-width="1.500"/>
<text x="835" y="242" font-size="8.800" style="fill:#444">Opacity</text>
<rect x="883.500" y="233.500" width="109" height="11" fill="url(#bar)" stroke="#8a8e91"/>
<text x="997" y="242" font-size="8.800" style="fill:#444">100 %</text>
<text x="835" y="260" font-size="8.800" style="fill:#444">Blending</text>
<rect x="885.500" y="249.500" width="133" height="15" rx="1" fill="#fff" stroke="#8a8e91"/>
<text x="887" y="261" font-size="8.800" style="fill:#333">Normal</text>
<path d="M1011 256.500h4l-2 2z" fill="#bbb"/>
<rect x="838.500" y="272.500" width="8" height="8" fill="#b9bcbf" stroke="#999"/>
<text x="851" y="280" font-size="8.800" style="fill:#a0a4a7">Protect Alpha</text>
<rect x="906.500" y="272.500" width="8" height="8" fill="#fff" stroke="#333"/>
<text x="919" y="280" font-size="8.800" style="fill:#444">Clipping</text>
<rect x="967.500" y="272.500" width="8" height="8" fill="#fff" stroke="#333"/>
<text x="980" y="280" font-size="8.800" style="fill:#444">Lock</text>

<rect x="833" y="287" width="175" height="285" fill="#808080"/>
<rect x="833" y="287" width="175" height="254" fill="#fff"/>
<path d="M833 314.500H1008M833 343.500H1008M833 372.500H1008M833 401.500H1008M833 428.500H1008M833 457.500H1008M833 485.500H1008M833 514.500H1008" stroke="#333" stroke-width=".8"/>
<rect x="833" y="287.400" width="175" height=".8" fill="#333"/>
<rect x="847" y="429" width="161" height="28" fill="#76c8f8"/>
<rect x="833" y="288" width="8" height="55" fill="#808080"/><rect x="833" y="373" width="8" height="28" fill="#808080"/>
<path d="M853.500 288V343M847.500 344V372M853.500 373V401M847.500 402V541" stroke="#222"/>
<path d="M836 302l2-2v2h2M836 330l2-2v2h2M836 387l2-2v2h2" stroke="#222" fill="none"/>
<circle cx="840" cy="358" r="3" class="dot"/><circle cx="847" cy="386" r="3" class="dot"/><circle cx="840" cy="414" r="3" class="dot"/><circle cx="840" cy="442" r="3" class="dot"/><circle cx="840" cy="471" r="3" class="dot"/><circle cx="840" cy="499" r="3" class="dot"/>
<rect x="864.500" y="291.500" width="25" height="19" class="th"/>
<rect x="864.500" y="319.500" width="25" height="19" class="th"/>
<rect x="857.500" y="348.500" width="25" height="19" class="th"/><path d="M860 353h4" stroke="#555"/>
<rect x="864.500" y="376.500" width="25" height="19" class="th"/><path d="M866 379l3 4 2-3" stroke="#e88" fill="none"/>
<rect x="857.500" y="405.500" width="25" height="19" class="th"/><path d="M859 408l3 5 2-3" stroke="#e55" stroke-width="1.500" fill="none"/>
<rect x="857" y="438" width="25" height="9" fill="#5a3ce0"/><path d="M858 440.500H881M858 444.500H881" stroke="#ddd" stroke-dasharray="2 1"/>
<rect x="857.500" y="461.500" width="25" height="19" class="th"/><path d="M860 465h3" stroke="#eaa"/>
<rect x="857.500" y="490" width="25" height="19" class="th"/>
<rect x="857.500" y="518.500" width="25" height="19" class="th"/><path d="M860 523h4" stroke="#a66"/>
<text class="lt"><tspan x="901" y="304">Layer4</tspan><tspan x="901" y="332">Layer3</tspan><tspan x="894" y="361">Layer2</tspan><tspan x="901" y="389">Layer8</tspan><tspan x="894" y="417">Layer7</tspan><tspan x="894" y="474">Layer5</tspan><tspan x="894" y="503">Layer6</tspan><tspan x="894" y="531">Layer1</tspan></text>
<text x="894" y="445" font-size="9" font-weight="bold" style="fill:#101a28">huntikola</text>
<rect x="1009" y="287" width="15" height="285" fill="#bfc4c7"/>
<rect x="1009.500" y="294.500" width="13" height="269" rx="4" fill="#bfc4c7" stroke="#9ea2a5"/>
<rect x="835.500" y="575.500" width="18" height="19" class="b"/><path d="M840 579H846L849 582V591H840Z" class="s"/>
<rect x="858.500" y="575.500" width="17" height="19" class="b"/><path d="M862 579H868L871 582V591H862Z" class="s"/><text x="864" y="589" font-size="6.500" style="fill:#555">8</text>
<rect x="879.500" y="575.500" width="19" height="19" class="b"/><path d="M884 579H890L893 582V591H884Z" class="s"/><text x="886.500" y="589" font-size="6.500" style="fill:#555">1</text>
<rect x="902.500" y="575.500" width="18" height="19" class="b"/><rect x="906" y="579" width="11" height="11" fill="url(#chk2)" stroke="#666"/>
<rect x="923.500" y="575.500" width="19" height="19" class="b"/><path d="M927 580H932L934 582H939V591H927Z" fill="#444"/>
<rect x="950.500" y="575.500" width="18" height="19" class="b"/><path d="M954 582H962V591H954ZM957 582V579H965V587H962" class="s"/>
<rect x="973.500" y="575.500" width="18" height="19" class="b"/><path d="M977 579h4v4h-4zM977 586h4v4h-4zM983 584h5v2h-5z" fill="#888"/>
<rect x="999.500" y="575.500" width="19" height="19" class="b"/><path d="M1004 582H1014V592H1004ZM1002 581H1016M1007 581V578H1011V581" stroke="#333" fill="none" stroke-width="1.200"/><path d="M1006 583h6v8h-6z" fill="#333"/>
</svg>
</body></html>
